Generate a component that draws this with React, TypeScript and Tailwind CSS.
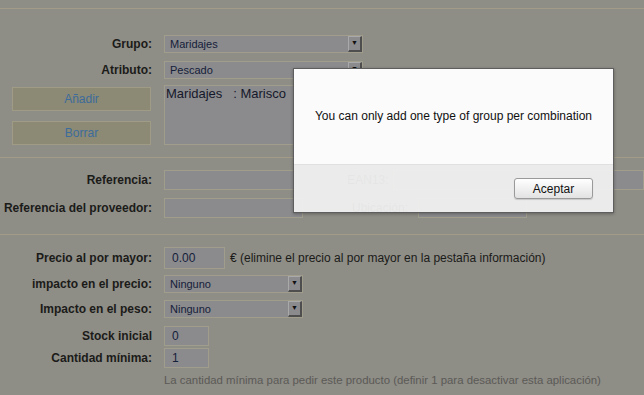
import React from "react";

const Label = ({ children }: { children: React.ReactNode }) => (
  <div className="w-[152px] shrink-0 text-right text-[12px] font-bold text-[#1b1b19]">
    {children}
  </div>
);

const Select = ({ value, w }: { value: string; w: string }) => (
  <div
    className={`${w} h-[18px] flex items-center justify-between border border-[#a19d8c] bg-[#8b8b8d] pl-[5px] text-[11px] text-[#15203a]`}
  >
    <span>{value}</span>
    <span className="flex h-[16px] w-[14px] items-center justify-center border-r-2 border-b-2 border-[#4e4e4e] border-t border-l border-t-[#a9a9a9] border-l-[#a9a9a9] text-[7px] text-[#111]">
      ▼
    </span>
  </div>
);

const Input = ({ w, h, value }: { w: string; h: string; value?: string }) => (
  <div
    className={`${w} ${h} flex items-center border border-[#a19d8c] bg-[#8b8b8d] pl-[7px] text-[12px] text-[#15203a]`}
  >
    {value}
  </div>
);

export default function App() {
  return (
    <div className="relative h-[395px] w-[644px] overflow-hidden bg-[#8e8d86] font-['Liberation_Sans',Arial,sans-serif]">
      <div className="pt-[8px]">
        <div className="h-px bg-[#a39b87]" />

        <div className="mt-[26px] flex items-center gap-[12px]">
          <Label>Grupo:</Label>
          <Select value="Maridajes" w="w-[199px]" />
        </div>
        <div className="mt-[8px] flex items-center gap-[12px]">
          <Label>Atributo:</Label>
          <Select value="Pescado" w="w-[199px]" />
        </div>

        <div className="mt-[6px] flex gap-[13px] pl-[12px]">
          <div className="flex w-[139px] flex-col gap-[10px] pt-[2px]">
            <div className="flex h-[24px] items-center justify-center border border-[#9f9b84] bg-[#8c8974] text-[12px] text-[#3c6c9c]">
              Añadir
            </div>
            <div className="flex h-[24px] items-center justify-center border border-[#9f9b84] bg-[#8c8974] text-[12px] text-[#3c6c9c]">
              Borrar
            </div>
          </div>
          <div className="h-[60px] w-[199px] border border-[#a19d8c] bg-[#8b8b8d] pl-[1px] text-[13px] leading-[16px] text-[#15182a]">
            Maridajes &nbsp;&nbsp;: Marisco
          </div>
        </div>

        <div className="mt-[12px] h-px bg-[#a39b87]" />

        <div className="mt-[12px] flex items-center gap-[12px]">
          <Label>Referencia:</Label>
          <Input w="w-[139px]" h="h-[20px]" />
          <div className="ml-[37px] w-[34px] whitespace-nowrap text-[12px] text-[#1b1b19]">EAN13:</div>
          <Input w="w-[260px]" h="h-[20px]" />
        </div>
        <div className="mt-[8px] flex items-center gap-[12px]">
          <Label>Referencia del proveedor:</Label>
          <Input w="w-[139px]" h="h-[20px]" />
          <div className="ml-[37px] w-[54px] whitespace-nowrap text-[12px] text-[#1b1b19]">Ubicación:</div>
          <Input w="w-[109px]" h="h-[20px]" />
        </div>

        <div className="mt-[16px] h-px bg-[#a39b87]" />

        <div className="mt-[12px] flex items-center gap-[12px]">
          <Label>Precio al por mayor:</Label>
          <div className="flex items-center gap-[5px]">
            <Input w="w-[61px]" h="h-[22px]" value="0.00" />
            <span className="text-[12px] text-[#1b1b19]">
              € (elimine el precio al por mayor en la pestaña información)
            </span>
          </div>
        </div>
        <div className="mt-[6px] flex items-center gap-[12px]">
          <Label>impacto en el precio:</Label>
          <Select value="Ninguno" w="w-[139px]" />
        </div>
        <div className="mt-[7px] flex items-center gap-[12px]">
          <Label>Impacto en el peso:</Label>
          <Select value="Ninguno" w="w-[139px]" />
        </div>
        <div className="mt-[8px] flex items-center gap-[12px]">
          <Label>Stock inicial</Label>
          <Input w="w-[45px]" h="h-[20px]" value="0" />
        </div>
        <div className="mt-[2px] flex items-center gap-[12px]">
          <Label>Cantidad mínima:</Label>
          <Input w="w-[45px]" h="h-[20px]" value="1" />
        </div>
        <div className="mt-[4px] pl-[164px] text-[11.4px] text-[#5b5a56]">
          La cantidad mínima para pedir este producto (definir 1 para desactivar esta aplicación)
        </div>
      </div>

      <div className="absolute left-[293px] top-[68px] w-[321px] border border-[#5e5e5e] shadow-[0_1px_3px_rgba(0,0,0,0.3)]">
        <div className="flex h-[95px] items-center justify-center bg-[#fbfbfb] pb-[2px] text-[12px] text-[#111]">
          You can only add one type of group per combination
        </div>
        <div className="flex h-[48px] items-center justify-end border-t border-[#e0e0e0] bg-[#f0f0f0]/95 pr-[20px]">
          <div className="flex h-[21px] w-[79px] items-center justify-center rounded-[3px] border border-[#9a9a9a] bg-gradient-to-b from-[#ffffff] to-[#e2e2e2] text-[12px] text-[#111] shadow-[0_1px_1px_rgba(0,0,0,0.15)]">
            Aceptar
          </div>
        </div>
      </div>
    </div>
  );
}
